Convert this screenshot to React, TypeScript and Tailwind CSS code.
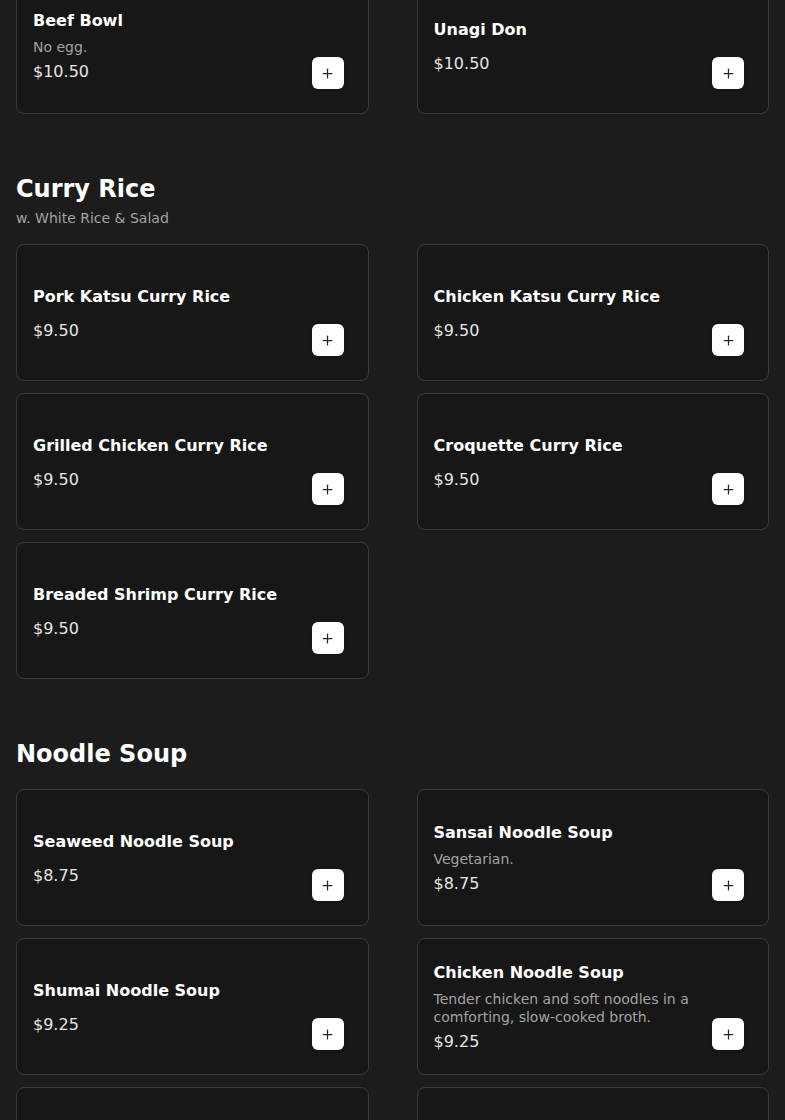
import React from "react";
import { Plus } from "lucide-react";

interface Item {
  name: string;
  price: string;
  desc?: string;
}

interface Section {
  title?: string;
  subtitle?: string;
  items: Item[];
}

const sections: Section[] = [
  {
    items: [
      { name: "Beef Bowl", desc: "No egg.", price: "$10.50" },
      { name: "Unagi Don", price: "$10.50" },
    ],
  },
  {
    title: "Curry Rice",
    subtitle: "w. White Rice & Salad",
    items: [
      { name: "Pork Katsu Curry Rice", price: "$9.50" },
      { name: "Chicken Katsu Curry Rice", price: "$9.50" },
      { name: "Grilled Chicken Curry Rice", price: "$9.50" },
      { name: "Croquette Curry Rice", price: "$9.50" },
      { name: "Breaded Shrimp Curry Rice", price: "$9.50" },
    ],
  },
  {
    title: "Noodle Soup",
    items: [
      { name: "Seaweed Noodle Soup", price: "$8.75" },
      { name: "Sansai Noodle Soup", desc: "Vegetarian.", price: "$8.75" },
      { name: "Shumai Noodle Soup", price: "$9.25" },
      {
        name: "Chicken Noodle Soup",
        desc: "Tender chicken and soft noodles in a comforting, slow-cooked broth.",
        price: "$9.25",
      },
      { name: "Curry Noodle Soup", price: "$9.25" },
      { name: "Beef Noodle Soup", price: "$10.25" },
    ],
  },
];

function MenuCard({ item }: { item: Item }) {
  return (
    <div className="flex h-[137px] justify-between gap-2 rounded-lg border border-[#3a3a3a] bg-[#171717] px-4 pt-[18px] pb-4">
      <div className="self-center">
        <h3 className="text-base font-bold leading-6 text-white">{item.name}</h3>
        {item.desc && (
          <p className="mt-1.5 text-sm leading-tight text-[#a3a3a3]">{item.desc}</p>
        )}
        <p className={`${item.desc ? "mt-1" : "mt-2.5"} text-base leading-6 text-[#e5e5e5]`}>
          {item.price}
        </p>
      </div>
      <button className="mr-2 mb-2 flex h-8 w-8 shrink-0 items-center justify-center self-end rounded-md bg-white text-[#262626] shadow-sm">
        <Plus size={15} strokeWidth={2} />
      </button>
    </div>
  );
}

export default function App() {
  return (
    <div className="min-h-screen overflow-hidden bg-[#1c1c1c] font-['DejaVu_Sans',sans-serif]">
      <div className="-mt-[23px] flex flex-col gap-[59px] px-4 pb-10">
        {sections.map((section, i) => (
          <section key={i}>
            {section.title && (
              <div className="mb-4 flex flex-col">
                <h2 className="mb-[3px] text-2xl font-bold text-white">{section.title}</h2>
                {section.subtitle && (
                  <p className="text-sm text-[#a3a3a3]">{section.subtitle}</p>
                )}
              </div>
            )}
            <div className="grid grid-cols-2 gap-x-12 gap-y-3">
              {section.items.map((item) => (
                <MenuCard key={item.name} item={item} />
              ))}
            </div>
          </section>
        ))}
      </div>
    </div>
  );
}
